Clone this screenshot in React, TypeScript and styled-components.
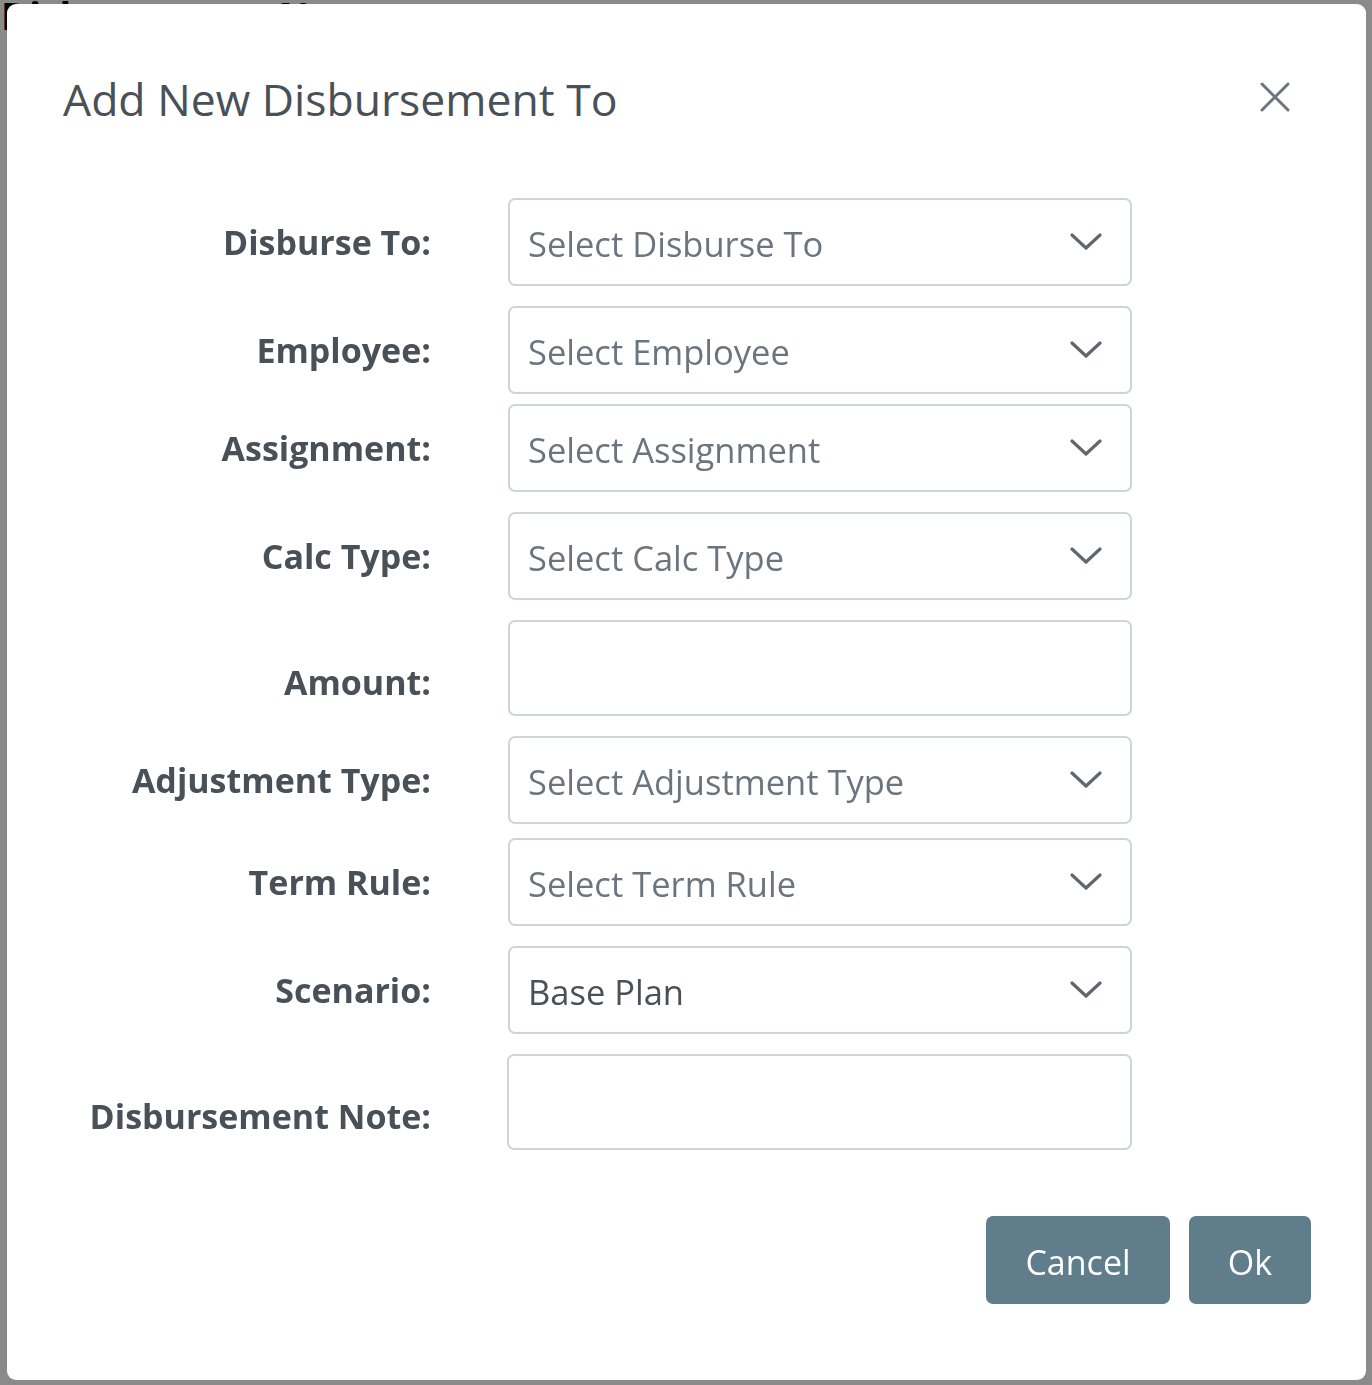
import React from 'react';
import styled, { createGlobalStyle } from 'styled-components';

const GlobalStyle = createGlobalStyle`
  html, body {
    margin: 0;
    padding: 0;
    background: #ffffff;
  }
  body {
    font-family: "Open Sans", "Noto Sans", Arial, sans-serif;
    width: 1372px;
    height: 1385px;
    overflow: hidden;
  }
`;

const PageHeading = styled.div`
  margin: -4px 0 0 0;
  padding-left: 1px;
  font-size: 38px;
  font-weight: 700;
  line-height: 1;
  color: #000000;
  white-space: nowrap;
`;

const Backdrop = styled.div`
  position: fixed;
  inset: 0;
  background: rgba(0, 0, 0, 0.46);
  display: flex;
  align-items: flex-start;
  justify-content: flex-start;
  padding: 4px 0 0 7px;
`;

const Modal = styled.div`
  width: 1359px;
  height: 1376px;
  box-sizing: border-box;
  background: #ffffff;
  border-radius: 9px;
  display: flex;
  flex-direction: column;
`;

const Header = styled.div`
  height: 194px;
  box-sizing: border-box;
  padding: 64px 76px 0 56px;
  display: flex;
  justify-content: space-between;
  align-items: flex-start;
`;

const Title = styled.h5`
  margin: 0;
  font-size: 44.5px;
  font-weight: 400;
  line-height: 62px;
  color: #495057;
`;

const CloseButton = styled.button`
  margin-top: 14px;
  width: 30px;
  height: 30px;
  padding: 0;
  border: none;
  background: transparent;
  display: flex;
  cursor: pointer;
`;

const Form = styled.div`
  display: flex;
  flex-direction: column;
`;

const Row = styled.div<{ $gap: number }>`
  margin-top: ${(p) => p.$gap}px;
  display: grid;
  grid-template-columns: 424px 624px;
  column-gap: 77px;
  align-items: center;
`;

const Label = styled.label<{ $drop?: number }>`
  text-align: right;
  font-size: 34px;
  font-weight: 700;
  color: #495057;
  line-height: 44px;
  padding-top: ${(p) => (p.$drop ?? 0) * 2}px;
`;

const SelectBox = styled.div`
  height: 88px;
  box-sizing: border-box;
  border: 2px solid #ced4da;
  border-radius: 7px;
  padding: 0 28px 0 18px;
  display: flex;
  align-items: center;
  justify-content: space-between;
  background: #ffffff;
`;

const SelectText = styled.span<{ $filled?: boolean }>`
  font-size: 34.5px;
  color: ${(p) => (p.$filled ? '#495057' : '#6c757d')};
  padding-top: 3px;
`;

const TextBox = styled.div<{ $shift?: number }>`
  height: 96px;
  box-sizing: border-box;
  border: 2px solid #ced4da;
  border-radius: 7px;
  background: #ffffff;
  margin-left: ${(p) => p.$shift ?? 0}px;
`;

const Footer = styled.div`
  margin-top: 66px;
  padding-right: 55px;
  display: flex;
  justify-content: flex-end;
  gap: 19px;
`;

const Button = styled.button<{ $w: number }>`
  width: ${(p) => p.$w}px;
  height: 88px;
  border: none;
  border-radius: 7px;
  background: #607d8b;
  color: #ffffff;
  font-family: "Open Sans", "Noto Sans", Arial, sans-serif;
  font-size: 34px;
  padding: 4px 0 0;
  cursor: pointer;
`;

const Chevron = () => (
  <svg width="32" height="20" viewBox="0 0 32 20" fill="none">
    <path d="M2 3 L16 16 L30 3" stroke="#5f6770" strokeWidth="3.2" strokeLinecap="round" strokeLinejoin="round" />
  </svg>
);

const CloseIcon = () => (
  <svg width="30" height="30" viewBox="0 0 30 30" fill="none">
    <path d="M2 2 L28 28 M28 2 L2 28" stroke="#6c757d" strokeWidth="3" strokeLinecap="round" />
  </svg>
);

type Field =
  | { kind: 'select'; label: string; value: string; filled?: boolean; gap: number }
  | { kind: 'text'; label: string; gap: number; shift?: number };

const fields: Field[] = [
  { kind: 'select', label: 'Disburse To:', value: 'Select Disburse To', gap: 0 },
  { kind: 'select', label: 'Employee:', value: 'Select Employee', gap: 20 },
  { kind: 'select', label: 'Assignment:', value: 'Select Assignment', gap: 10 },
  { kind: 'select', label: 'Calc Type:', value: 'Select Calc Type', gap: 20 },
  { kind: 'text', label: 'Amount:', gap: 20 },
  { kind: 'select', label: 'Adjustment Type:', value: 'Select Adjustment Type', gap: 20 },
  { kind: 'select', label: 'Term Rule:', value: 'Select Term Rule', gap: 14 },
  { kind: 'select', label: 'Scenario:', value: 'Base Plan', filled: true, gap: 20 },
  { kind: 'text', label: 'Disbursement Note:', gap: 20, shift: -1 },
];

const App: React.FC = () => {
  return (
    <>
      <GlobalStyle />
      <PageHeading>Disbursement Notes</PageHeading>
      <Backdrop>
        <Modal>
          <Header>
            <Title>Add New Disbursement To</Title>
            <CloseButton aria-label="Close">
              <CloseIcon />
            </CloseButton>
          </Header>
          <Form>
            {fields.map((f) => (
              <Row key={f.label} $gap={f.gap}>
                <Label $drop={f.kind === 'text' ? 14 : 0}>{f.label}</Label>
                {f.kind === 'select' ? (
                  <SelectBox>
                    <SelectText $filled={f.filled}>{f.value}</SelectText>
                    <Chevron />
                  </SelectBox>
                ) : (
                  <TextBox $shift={f.shift} />
                )}
              </Row>
            ))}
          </Form>
          <Footer>
            <Button $w={184}>Cancel</Button>
            <Button $w={122}>Ok</Button>
          </Footer>
        </Modal>
      </Backdrop>
    </>
  );
};

export default App;
